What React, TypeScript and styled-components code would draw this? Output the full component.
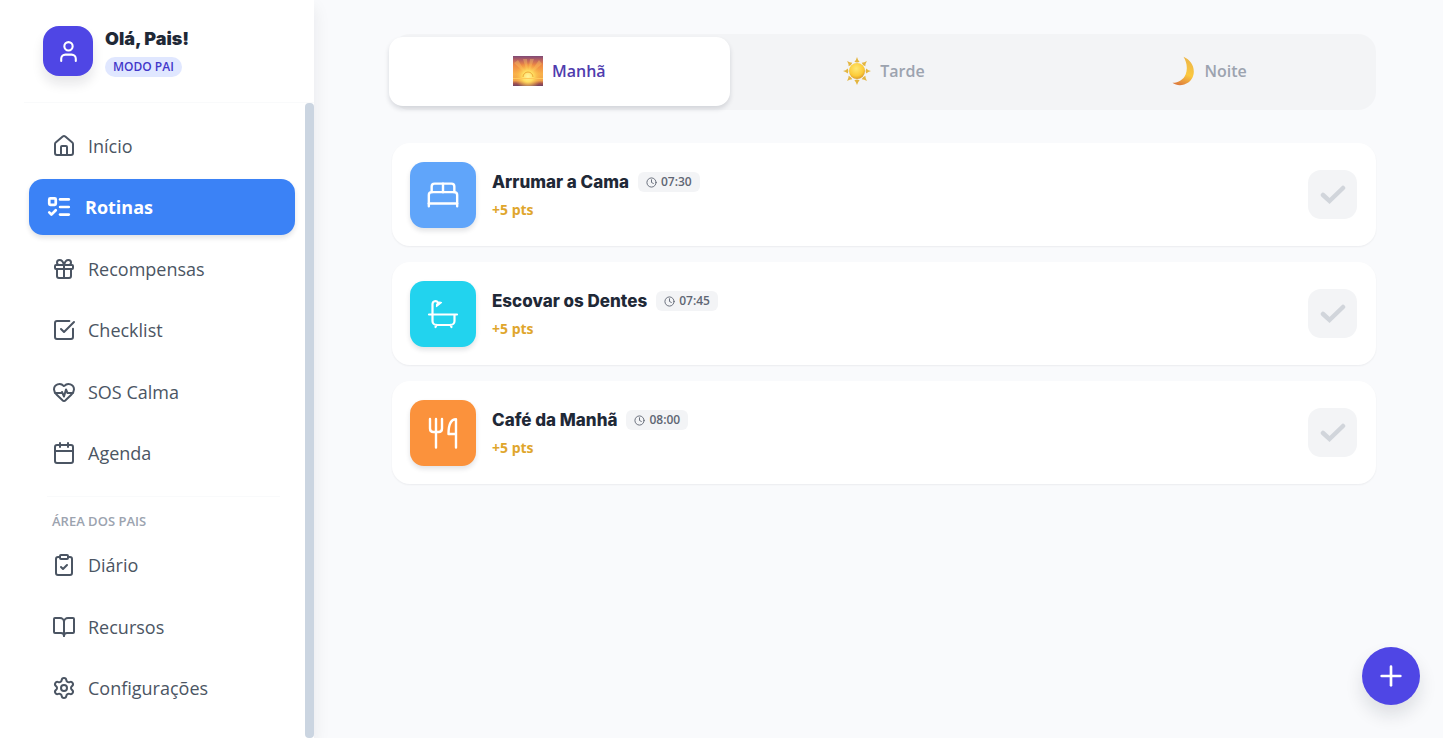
import React from "react";
import styled, { createGlobalStyle } from "styled-components";
import {
  House, ListTodo, Gift, SquareCheckBig, HeartPulse, Calendar, ClipboardCheck,
  BookOpen, Settings, User, Clock, BedDouble, Plus, LucideIcon,
} from "lucide-react";

const Global = createGlobalStyle`
  *, *::before, *::after { box-sizing: border-box; }
  body {
    margin: 0;
    background: #f9fafc;
    color: #1f2937;
    font-family: "Open Sans", "Noto Sans", sans-serif;
  }
  button { font: inherit; border: 0; padding: 0; cursor: pointer; }
  h1, h2, h3, p, ul { margin: 0; padding: 0; }
  ul { list-style: none; }
`;

const Page = styled.div`
  display: flex;
  height: 100vh;
`;

const Sidebar = styled.aside`
  display: flex;
  flex-direction: column;
  flex: 0 0 314px;
  background: #fff;
  box-shadow: 0 8px 16px rgba(15, 23, 42, 0.08);
`;

const Profile = styled.header`
  display: flex;
  align-items: center;
  gap: 12px;
  height: 103px;
  margin-left: 24px;
  padding-left: 19px;
  border-bottom: 1px solid #f9fafb;
`;

const Avatar = styled.div`
  display: grid;
  place-items: center;
  width: 50px;
  height: 50px;
  border-radius: 16px;
  background: #4f46e5;
  color: #fff;
  box-shadow: 0 8px 12px rgba(15, 23, 42, 0.1);
`;

const Identity = styled.div`
  display: flex;
  flex-direction: column;
  align-items: flex-start;
  gap: 4px;
`;

const Greeting = styled.h1`
  font-size: 18px;
  line-height: 28px;
  font-weight: 900;
  font-family: Inter, sans-serif;
`;

const ModeBadge = styled.span`
  padding: 0 8px;
  border-radius: 10px;
  background: #e0e7ff;
  color: #4338ca;
  font-size: 12px;
  line-height: 20px;
  font-weight: 600;
`;

const NavArea = styled.div`
  display: flex;
  flex: 1;
  min-height: 0;
`;

const Nav = styled.nav`
  flex: 1;
  padding: 15px 10px 0 29px;
  overflow-y: auto;
  scrollbar-width: none;
`;

const ScrollThumb = styled.div`
  width: 9px;
  border-radius: 4px;
  background: #cbd5e1;
`;

const NavGroup = styled.ul<{ $height: number }>`
  display: flex;
  flex-direction: column;
  justify-content: space-between;
  height: ${(p) => p.$height}px;
`;

const NavLink = styled.a<{ $active?: boolean }>`
  display: flex;
  align-items: center;
  gap: ${(p) => (p.$active ? 13 : 12)}px;
  height: 56px;
  padding-left: ${(p) => (p.$active ? 17 : 23)}px;
  border-radius: 14px;
  background: ${(p) => (p.$active ? "#3b82f6" : "transparent")};
  color: ${(p) => (p.$active ? "#fff" : "#4b5563")};
  box-shadow: ${(p) => (p.$active ? "0 3px 5px rgba(15, 23, 42, 0.12)" : "none")};
  font-size: 18px;
  font-weight: ${(p) => (p.$active ? 700 : 400)};
  text-decoration: none;
`;

const SectionTitle = styled.h2`
  margin: 15px 15px 6px 18px;
  padding: 14px 0 0 5px;
  border-top: 1px solid #f9fafb;
  color: #9ca3af;
  font-size: 13px;
  line-height: 20px;
  font-weight: 600;
`;

const Main = styled.main`
  flex: 1;
  min-width: 0;
  padding: 34px 67px 0 78px;
`;

const Tabs = styled.div`
  display: grid;
  grid-template-columns: repeat(3, 1fr);
  padding: 3px 5px 4px;
  border-radius: 18px;
  background: #f3f4f6;
`;

const Tab = styled.button<{ $active?: boolean }>`
  display: flex;
  align-items: center;
  justify-content: center;
  gap: 9px;
  height: 69px;
  margin: 0 ${(p) => (p.$active ? -8 : 0)}px;
  padding-bottom: 2px;
  border-radius: 14px;
  background: ${(p) => (p.$active ? "#fff" : "transparent")};
  color: ${(p) => (p.$active ? "#4f3cae" : "#9ca3af")};
  box-shadow: ${(p) => (p.$active ? "0 3px 5px rgba(15, 23, 42, 0.14)" : "none")};
  font-size: 16px;
  font-weight: 600;
`;

const Tasks = styled.ul`
  display: flex;
  flex-direction: column;
  gap: 16px;
  margin-top: 33px;
`;

const Task = styled.li`
  display: flex;
  align-items: center;
  gap: 16px;
  height: 103px;
  padding: 0 19px 0 18px;
  border-radius: 18px;
  background: #fff;
  box-shadow: 0 1px 2px rgba(15, 23, 42, 0.06);
`;

const TaskIcon = styled.div<{ $color: string }>`
  display: grid;
  place-items: center;
  width: 66px;
  height: 66px;
  border-radius: 14px;
  background: ${(p) => p.$color};
  color: #fff;
  box-shadow: 0 3px 5px rgba(15, 23, 42, 0.12);
`;

const TaskBody = styled.div`
  flex: 1;
  padding-top: 3px;
`;

const TaskHead = styled.div`
  display: flex;
  align-items: center;
  gap: 9px;
`;

const TaskTitle = styled.h3`
  font-family: Inter, sans-serif;
  font-size: 17px;
  line-height: 28px;
  font-weight: 800;
`;

const Time = styled.span`
  display: flex;
  align-items: center;
  gap: 4px;
  padding: 0 8px;
  border-radius: 6px;
  background: #f3f4f6;
  color: #5f6673;
  font-size: 12px;
  line-height: 20px;
  font-weight: 600;
`;

const Points = styled.p`
  color: #dfa62c;
  font-size: 14px;
  line-height: 28px;
  font-weight: 700;
`;

const DoneButton = styled.button`
  display: grid;
  place-items: center;
  width: 49px;
  height: 49px;
  border-radius: 13px;
  background: #f3f4f6;
`;

const AddButton = styled.button`
  position: fixed;
  right: 23px;
  bottom: 33px;
  display: grid;
  place-items: center;
  width: 58px;
  height: 58px;
  border-radius: 50%;
  background: #4f46e5;
  color: #fff;
  box-shadow: 0 10px 18px rgba(15, 23, 42, 0.12);
`;

const Bath = () => (
  <svg width="34" height="34" viewBox="0 0 34 34" fill="none" stroke="currentColor" strokeWidth="2.2" strokeLinecap="round" strokeLinejoin="round">
    <path d="M3 17.5h28M6.500 17.500V7a3 3 0 0 1 5.500-1.500M6.500 17.500v6.500a4 4 0 0 0 4 4h14a4 4 0 0 0 4-4v-6.500M10.500 28l-1 2M24.500 28l1 2" />
    <path d="M10.500 9.500c-.5-3 2-5 5-4z" fill="currentColor" strokeWidth="1.200" />
  </svg>
);

const ForkKnife = () => (
  <svg width="34" height="34" viewBox="0 0 34 34" fill="none" stroke="currentColor" strokeWidth="2.4" strokeLinecap="round" strokeLinejoin="round">
    <path d="M4 3v9.500q0 3.500 3.500 3.500h5q3.500 0 3.500-3.500V3M10 3v28.500M30 31.500V3.200c-5 0-7.500 6-7.500 14.800H30" />
  </svg>
);

const CheckMark = () => (
  <svg width="26" height="20" viewBox="0 0 26 20" fill="none" stroke="#d1d5db" strokeWidth="4.500" strokeLinecap="round" strokeLinejoin="miter">
    <path d="M3 10l6.500 6L23 3" />
  </svg>
);

const Sunrise = () => (
  <svg width="30" height="30" viewBox="0 0 30 30">
    <defs>
      <linearGradient id="sky" x1="0" y1="0" x2="0" y2="1">
        <stop offset="0" stopColor="#7d4a78" />
        <stop offset="0.120" stopColor="#b55f62" />
        <stop offset="0.300" stopColor="#ee8844" />
        <stop offset="0.600" stopColor="#f9b24a" />
        <stop offset="0.820" stopColor="#f0a24a" />
        <stop offset="0.910" stopColor="#a8554c" />
        <stop offset="1" stopColor="#6f4264" />
      </linearGradient>
      <radialGradient id="glow" cx="0.500" cy="0.680" r="0.450">
        <stop offset="0" stopColor="#fff3a0" />
        <stop offset="0.400" stopColor="#ffdf62" />
        <stop offset="1" stopColor="#fbb040" stopOpacity="0" />
      </radialGradient>
    </defs>
    <path fill="url(#sky)" d="M0 0h30v30H0z" />
    <path fill="#ffd067" fillOpacity="0.350" d="M15 20L1 7l4-3zM15 20L10 3h4zM15 20l2-17h4zM15 20L26 4l3 4z" />
    <path fill="url(#glow)" d="M0 0h30v30H0z" />
    <path fill="none" stroke="#eda838" d="M10 21a5 5 0 0 1 10 0" />
    <path stroke="#ffc95a" d="M0 22.500h30" />
  </svg>
);

const Sun = () => (
  <svg width="28" height="30" viewBox="0 0 28 30">
    <defs>
      <radialGradient id="disk" cx="0.450" cy="0.350" r="0.650">
        <stop offset="0" stopColor="#ffe873" />
        <stop offset="0.700" stopColor="#fccb38" />
        <stop offset="1" stopColor="#dd9d2a" />
      </radialGradient>
    </defs>
    <g fill="#e3b540">
      {[0, 45, 90, 135, 180, 225, 270, 315].map((a) => (
        <path key={a} d="M14 1q.6 2.800 2.600 4.800-2.600 1.200-5.200 0Q13.400 3.800 14 1z" transform={`rotate(${a} 14 15)`} />
      ))}
    </g>
    <circle cx="14" cy="15" r="8" fill="url(#disk)" />
  </svg>
);

const Moon = () => (
  <svg width="25" height="30" viewBox="0 0 25 30">
    <defs>
      <linearGradient id="moon" x1="0.600" y1="0" x2="0.300" y2="1">
        <stop offset="0" stopColor="#ecb548" />
        <stop offset="0.550" stopColor="#fbc93f" />
        <stop offset="1" stopColor="#dd7a3c" />
      </linearGradient>
    </defs>
    <path d="M12.500.8C20 4 24 11 22.500 18.500 20.500 28.500 8 32 1.500 26.800c5.500.2 11-3 13.200-8.600C17 12 15.500 5.500 12.500.8z" fill="url(#moon)" />
  </svg>
);

const menu: [string, LucideIcon][] = [
  ["Início", House], ["Rotinas", ListTodo], ["Recompensas", Gift],
  ["Checklist", SquareCheckBig], ["SOS Calma", HeartPulse], ["Agenda", Calendar],
];
const parentMenu: [string, LucideIcon][] = [
  ["Diário", ClipboardCheck], ["Recursos", BookOpen], ["Configurações", Settings],
];
const tasks = [
  { title: "Arrumar a Cama", time: "07:30", color: "#60a5fa", icon: <BedDouble size={34} strokeWidth={1.7} /> },
  { title: "Escovar os Dentes", time: "07:45", color: "#22d3ee", icon: <Bath /> },
  { title: "Café da Manhã", time: "08:00", color: "#fb923c", icon: <ForkKnife /> },
];

const NavItem = ({ label, icon: Icon }: { label: string; icon: LucideIcon }) => {
  const active = label === "Rotinas";
  return (
    <li>
      <NavLink href="#" $active={active} aria-current={active ? "page" : undefined}>
        <Icon size={active ? 26 : 24} strokeWidth={active ? 2.5 : 2} />
        {label}
      </NavLink>
    </li>
  );
};

export default function App() {
  return (
    <Page>
      <Global />
      <Sidebar>
        <Profile>
          <Avatar><User size={25} /></Avatar>
          <Identity>
            <Greeting>Olá, Pais!</Greeting>
            <ModeBadge>MODO PAI</ModeBadge>
          </Identity>
        </Profile>
        <NavArea>
          <Nav>
            <NavGroup $height={363}>
              {menu.map(([l, i]) => <NavItem key={l} label={l} icon={i} />)}
            </NavGroup>
            <SectionTitle>ÁREA DOS PAIS</SectionTitle>
            <NavGroup $height={179}>
              {parentMenu.map(([l, i]) => <NavItem key={l} label={l} icon={i} />)}
            </NavGroup>
          </Nav>
          <ScrollThumb />
        </NavArea>
      </Sidebar>
      <Main>
        <Tabs>
          <Tab $active><Sunrise />Manhã</Tab>
          <Tab><Sun />Tarde</Tab>
          <Tab><Moon />Noite</Tab>
        </Tabs>
        <Tasks>
          {tasks.map((t) => (
            <Task key={t.title}>
              <TaskIcon $color={t.color}>{t.icon}</TaskIcon>
              <TaskBody>
                <TaskHead>
                  <TaskTitle>{t.title}</TaskTitle>
                  <Time><Clock size={11} />{t.time}</Time>
                </TaskHead>
                <Points>+5 pts</Points>
              </TaskBody>
              <DoneButton aria-label={`Concluir ${t.title}`}><CheckMark /></DoneButton>
            </Task>
          ))}
        </Tasks>
      </Main>
      <AddButton aria-label="Adicionar rotina"><Plus size={32} /></AddButton>
    </Page>
  );
}
